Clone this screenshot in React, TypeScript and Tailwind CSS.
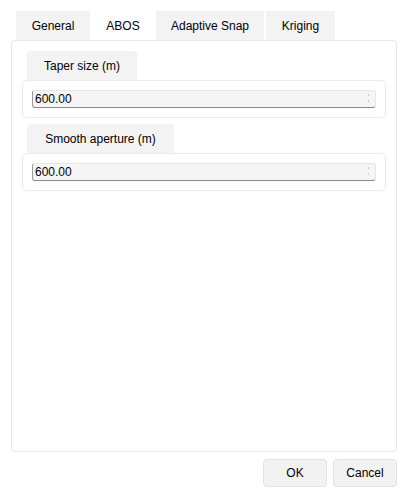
import React from "react";

const tabs = [
  { label: "General", w: "w-[74px]" },
  { label: "ABOS", w: "w-[66px]", active: true },
  { label: "Adaptive Snap", w: "w-[108px]" },
  { label: "Kriging", w: "w-[69px] ml-[2px]" },
];

function SpinField({ value }: { value: string }) {
  return (
    <div className="relative flex h-[18px] items-center rounded-[3px] border border-[#e6e6e6] border-b-[#8a8a8a] border-l-[#9a9a9a] bg-[#f5f5f5] pl-[2px] text-[12px] text-black">
      {value}
      <span className="absolute right-[6px] top-[3px] flex flex-col items-center gap-[4px]">
        <span className="h-[2px] w-[1px] bg-[#c8c8c8]" />
        <span className="h-[2px] w-[1px] bg-[#c8c8c8]" />
      </span>
    </div>
  );
}

function Group({ label, tabW, value }: { label: string; tabW: string; value: string }) {
  return (
    <div className="flex flex-col">
      <div
        className={`ml-[5px] flex h-[29px] items-center justify-center rounded-t-[4px] bg-[#f3f3f3] text-[12px] text-black ${tabW}`}
      >
        {label}
      </div>
      <div className="rounded-[4px] border border-[#ececec] px-[9px] py-[9px]">
        <SpinField value={value} />
      </div>
    </div>
  );
}

export default function App() {
  return (
    <div className="flex h-[498px] w-[408px] flex-col bg-white font-['Liberation_Sans',Arial,sans-serif]">
      <div className="ml-[16px] mt-[11px] flex">
        {tabs.map((t) => (
          <div
            key={t.label}
            className={`flex h-[29px] items-center justify-center text-[12px] text-black ${t.w} ${
              t.active ? "bg-white" : "bg-[#f3f3f3]"
            }`}
          >
            {t.label}
          </div>
        ))}
      </div>
      <div className="mx-[11px] flex h-[412px] flex-col gap-[6px] rounded-[4px] border border-[#e8e8e8] px-[10px] pt-[10px]">
        <Group label="Taper size (m)" tabW="w-[110px]" value="600.00" />
        <Group label="Smooth aperture (m)" tabW="w-[147px]" value="600.00" />
      </div>
      <div className="mr-[11px] mt-[7px] flex justify-end gap-[6px]">
        <button className="h-[28px] w-[64px] rounded-[4px] border border-[#e2e2e2] bg-[#f2f2f2] text-[12px] text-black">
          OK
        </button>
        <button className="h-[28px] w-[64px] rounded-[4px] border border-[#e2e2e2] bg-[#f2f2f2] text-[12px] text-black">
          Cancel
        </button>
      </div>
    </div>
  );
}
